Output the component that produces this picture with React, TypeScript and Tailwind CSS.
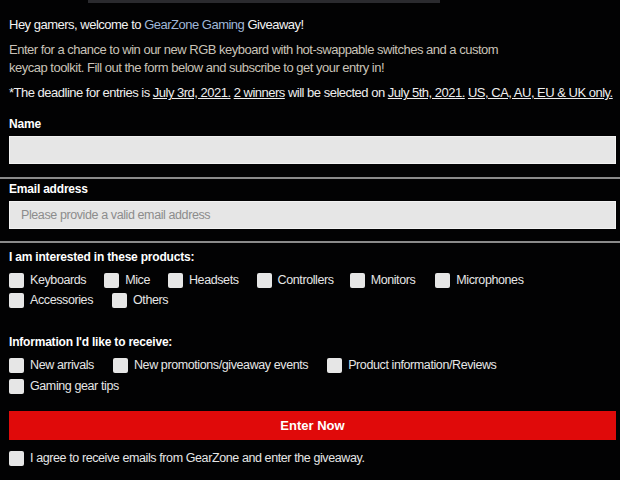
import React from "react";

function Box() {
  return <span className="inline-block w-[15px] h-[15px] rounded-[2px] bg-[#e6e6e6] shrink-0" />;
}

function Check({ label, className = "" }: { label: string; className?: string }) {
  return (
    <label className={"flex items-center gap-[6px] h-[20px] " + className}>
      <Box />
      <span className="text-[12.5px] tracking-[-0.4px] text-[#e6e6e6] leading-none whitespace-nowrap">{label}</span>
    </label>
  );
}

export default function App() {
  const font = { fontFamily: '"Liberation Sans", Arial, sans-serif' };
  return (
    <div className="w-[620px] h-[480px] bg-[#020203] text-white overflow-hidden relative" style={font}>
      <div className="absolute left-[88px] top-0 w-[352px] h-[3px] bg-[#2a2a2e]" />
      <div className="px-[9px] pt-[16px]">
        <p className="text-[13px] tracking-[-0.5px] leading-[18px] text-[#f2f2f2]">
          Hey gamers, welcome to <span className="text-[#9fb7d8]">GearZone Gaming</span> Giveaway!
        </p>
        <p className="mt-[7px] text-[13px] tracking-[-0.5px] leading-[18px] text-[#c9c2b8] w-[505px]">
          Enter for a chance to win our new RGB keyboard with hot-swappable switches and a custom keycap toolkit.
          Fill out the form below and subscribe to get your entry in!
        </p>
        <p className="mt-[7px] text-[13px] leading-[18px] text-[#eeeeee] whitespace-nowrap tracking-[-0.5px]">
          *The deadline for entries is <span className="underline">July 3rd, 2021.</span>{" "}
          <span className="underline">2 winners</span> will be selected on{" "}
          <span className="underline">July 5th, 2021.</span>{" "}
          <span className="underline">US, CA, AU, EU &amp; UK only.</span>
        </p>
        <div className="mt-[15px] text-[12px] tracking-[-0.2px] font-bold leading-[14px] text-white">Name</div>
        <div className="mt-[5px] h-[28px] w-[607px] bg-[#e6e6e6] border border-[#f2f2f2]" />
      </div>
      <div className="mt-[13px] h-[2px] bg-[#8a8a8a]" />
      <div className="px-[9px] pt-[3px]">
        <div className="text-[12px] tracking-[-0.2px] font-bold leading-[14px] text-white">Email address</div>
        <div className="mt-[5px] h-[28px] w-[607px] bg-[#e6e6e6] border border-[#f2f2f2] flex items-center pl-[11px] text-[12.5px] tracking-[-0.4px] text-[#8c8c8c]">
          Please provide a valid email address
        </div>
      </div>
      <div className="mt-[12px] h-[2px] bg-[#8a8a8a]" />
      <div className="px-[9px] pt-[7px]">
        <div className="text-[12px] tracking-[-0.2px] font-bold leading-[14px] text-white">I am interested in these products:</div>
        <div className="mt-[6px] flex w-[610px]">
          <Check label="Keyboards" className="mr-[18px]" />
          <Check label="Mice" className="mr-[18px]" />
          <Check label="Headsets" className="mr-[18px]" />
          <Check label="Controllers" className="mr-[16px]" />
          <Check label="Monitors" className="mr-[20px]" />
          <Check label="Microphones" />
        </div>
        <div className="flex">
          <Check label="Accessories" className="mr-[19px]" />
          <Check label="Others" />
        </div>
        <div className="mt-[25px] text-[12px] tracking-[-0.2px] font-bold leading-[14px] text-white">Information I'd like to receive:</div>
        <div className="mt-[6px] flex">
          <Check label="New arrivals" className="mr-[19px]" />
          <Check label="New promotions/giveaway events" className="mr-[19px]" />
          <Check label="Product information/Reviews" />
        </div>
        <div className="mt-[1px] flex">
          <Check label="Gaming gear tips" />
        </div>
        <button className="mt-[15px] h-[29px] w-[607px] bg-[#e00a0a] text-white font-bold text-[13px] flex items-center justify-center">
          Enter Now
        </button>
        <div className="mt-[8px] flex">
          <Check label="I agree to receive emails from GearZone and enter the giveaway." />
        </div>
      </div>
    </div>
  );
}
